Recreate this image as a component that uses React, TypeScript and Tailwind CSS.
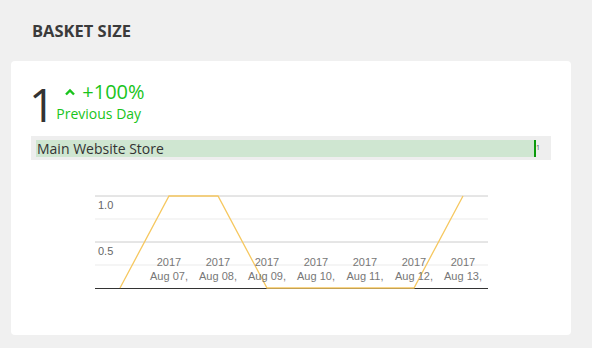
const points = [0, 1, 1, 0, 0, 0, 0, 1];
const labels = ["Aug 07,", "Aug 08,", "Aug 09,", "Aug 10,", "Aug 11,", "Aug 12,", "Aug 13,"];

const BasketChart = () => {
  // chart coordinates are local to the svg (origin at the card's inner left edge)
  const x0 = 89;
  const step = 49;
  const top = 20;
  const bottom = 112;
  const path = points
    .map((v, i) => `${i === 0 ? "M" : "L"}${x0 + i * step} ${bottom - v * (bottom - top)}`)
    .join(" ");
  return (
    <svg width="520" height="130" className="block" style={{ fontFamily: "'Liberation Sans', Arial, sans-serif" }}>
      <line x1="64" x2="457" y1={top} y2={top} stroke="#cccccc" />
      <line x1="64" x2="457" y1="43" y2="43" stroke="#ebebeb" />
      <line x1="64" x2="457" y1="66" y2="66" stroke="#cccccc" />
      <line x1="64" x2="457" y1="89" y2="89" stroke="#ebebeb" />
      <text x="67" y="33" fontSize="11" fill="#666">1.0</text>
      <text x="67" y="79" fontSize="11" fill="#666">0.5</text>
      <line x1="64" x2="457" y1={bottom + 0.5} y2={bottom + 0.5} stroke="#333333" />
      <path d={path} fill="none" stroke="#f6c860" strokeWidth="1.3" />
      {labels.map((l, i) => (
        <g key={l}>
          <text x={x0 + (i + 1) * step} y="90" fontSize="11" fill="#777" textAnchor="middle">
            2017
          </text>
          <text x={x0 + (i + 1) * step} y="104" fontSize="11" fill="#777" textAnchor="middle">
            {l}
          </text>
        </g>
      ))}
    </svg>
  );
};

export default function App() {
  return (
    <div className="w-[592px] h-[348px] bg-[#f0f0f0] font-['Open_Sans',sans-serif] overflow-hidden">
      <h2 className="pl-8 pt-[19px] h-[61px] text-[16.5px] font-bold text-[#3b3b3b]">BASKET SIZE</h2>
      <div className="ml-[11px] w-[560px] h-[274px] bg-white rounded-[4px] px-5 pt-[14px]">
        <div className="flex items-start">
          <span className="text-[46px] font-normal leading-none text-[#333] mt-[6px] -ml-[2px]">1</span>
          <div className="ml-[1px] mt-[4px] flex flex-col text-[#19c41c]">
            <div className="flex items-center">
              <svg width="10" height="8" viewBox="0 0 10 8" className="ml-[9px] mr-[7px]">
                <path d="M1 6.5 L5 2.5 L9 6.5" fill="none" stroke="#19c41c" strokeWidth="2.4" />
              </svg>
              <span className="text-[20px] leading-[26px]">+100%</span>
            </div>
            <span className="text-[14px] leading-[18px]">Previous Day</span>
          </div>
        </div>
        <div className="mt-[9px] h-[24px] bg-[#eeeeee] px-[5px] pt-[4px] pb-[3px] flex items-stretch">
          <div className="w-[498px] bg-[#cfe6d1] flex items-center pl-[1px] text-[14px] text-[#333]">
            Main Website Store
          </div>
          <div className="w-[2px] bg-[#0a9a0a]" />
          <span className="text-[7px] leading-[16px] text-[#555]">1</span>
        </div>
        <div className="mt-[16px]">
          <BasketChart />
        </div>
      </div>
    </div>
  );
}
